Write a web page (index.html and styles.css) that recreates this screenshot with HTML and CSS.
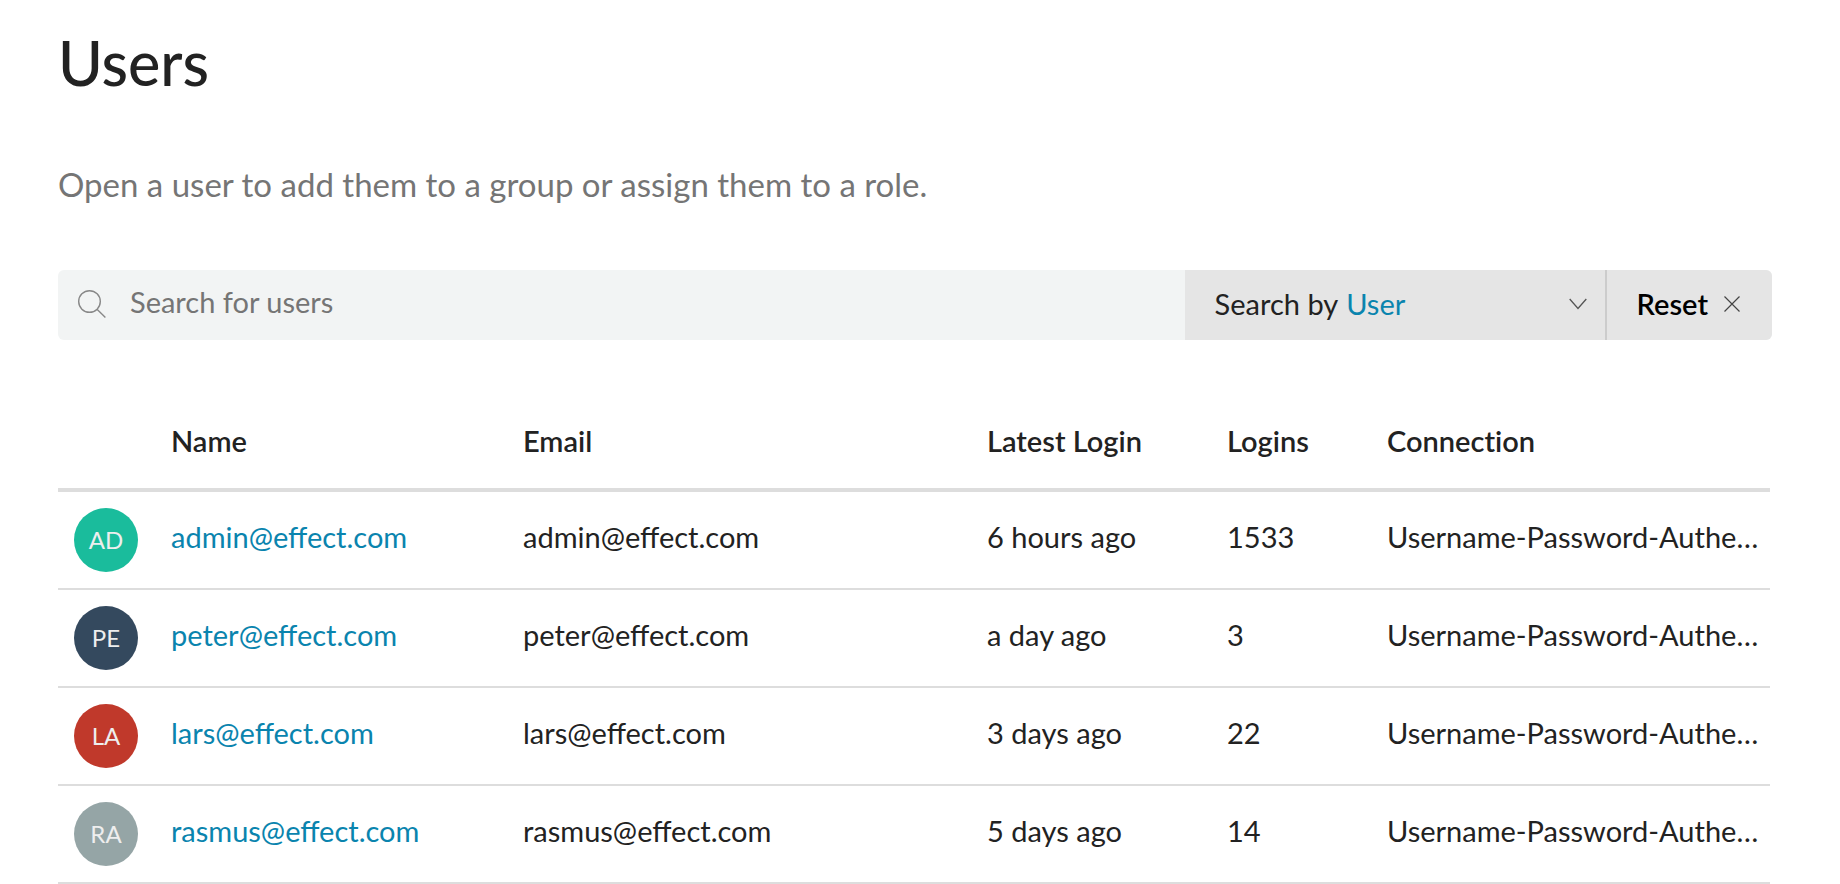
FILE: index.html
```html
<!DOCTYPE html>
<html lang="en">
<head>
<meta charset="utf-8">
<title>Users</title>
<link rel="stylesheet" href="styles.css">
</head>
<body>
<main class="page">
  <h1 class="title">Users</h1>
  <p class="intro">Open a user to add them to a group or assign them to a role.</p>

  <form class="search">
    <label class="search-field">
      <svg class="icon-search" viewBox="0 0 28 28" aria-hidden="true"><circle cx="11.5" cy="11.5" r="10.8"/><path d="M19 19.2l8.4 8.2"/></svg>
      <input class="search-input" type="text" placeholder="Search for users" aria-label="Search for users">
    </label>
    <label class="search-by">
      <span>Search by</span>
      <select class="search-select">
        <option>User</option>
        <option>Email</option>
        <option>Connection</option>
      </select>
      <svg class="icon-chevron" viewBox="0 0 18 12" aria-hidden="true"><path d="M.7 1L9 10.5 17.300 1"/></svg>
    </label>
    <button class="reset" type="reset">
      Reset
      <svg class="icon-close" viewBox="0 0 16 16" aria-hidden="true"><path d="M.5.5l15 15M15.500.5l-15 15"/></svg>
    </button>
  </form>

  <table class="users">
    <colgroup>
      <col class="col-avatar"><col class="col-name"><col class="col-email"><col class="col-latest"><col class="col-logins"><col>
    </colgroup>
    <thead>
      <tr><td></td><th scope="col">Name</th><th scope="col">Email</th><th scope="col">Latest Login</th><th scope="col">Logins</th><th scope="col">Connection</th></tr>
    </thead>
    <tbody>
      <tr><td><span class="avatar avatar-teal">AD</span></td><td><a href="#admin">admin@effect.com</a></td><td>admin@effect.com</td><td>6 hours ago</td><td>1533</td><td>Username-Password-Authe…</td></tr>
      <tr><td><span class="avatar avatar-navy">PE</span></td><td><a href="#peter">peter@effect.com</a></td><td>peter@effect.com</td><td>a day ago</td><td>3</td><td>Username-Password-Authe…</td></tr>
      <tr><td><span class="avatar avatar-red">LA</span></td><td><a href="#lars">lars@effect.com</a></td><td>lars@effect.com</td><td>3 days ago</td><td>22</td><td>Username-Password-Authe…</td></tr>
      <tr><td><span class="avatar avatar-gray">RA</span></td><td><a href="#rasmus">rasmus@effect.com</a></td><td>rasmus@effect.com</td><td>5 days ago</td><td>14</td><td>Username-Password-Authe…</td></tr>
    </tbody>
  </table>
</main>
</body>
</html>
```
FILE: styles.css
```css
* { box-sizing: border-box; }

body {
  margin: 0;
  background: #fff;
  color: #222;
  font-family: Lato, "Open Sans", sans-serif;
  font-size: 29px;
  line-height: 40px;
}

.page { padding: 26px 68px 0 58px; }

.title {
  margin: 0;
  font-size: 61px;
  line-height: 74px;
  font-weight: 500;
}

.intro {
  margin: 60px 0 0;
  color: #757575;
  font-size: 33px;
  line-height: 48px;
}

.search {
  display: flex;
  height: 70px;
  margin-top: 62px;
  border-radius: 6px;
  overflow: hidden;
  background: #f2f4f4;
}

.search-field {
  display: flex;
  flex: 1;
  align-items: center;
  gap: 24px;
  padding: 0 0 2px 20px;
}

.search-input {
  flex: 1;
  min-width: 0;
  height: 66px;
  padding: 0 0 6px;
  border: 0;
  outline: 0;
  background: none;
  color: #222;
  font: inherit;
}

.search-input::placeholder { color: #757575; opacity: 1; }

.search-by {
  display: flex;
  align-items: center;
  gap: 8px;
  width: 422px;
  padding: 0 18px 2px 30px;
  border-right: 2px solid #ccc;
  background: #e5e5e5;
}

.search-select {
  flex: 1;
  padding: 0;
  border: 0;
  outline: 0;
  appearance: none;
  background: none;
  color: #0a84ae;
  font: inherit;
}

.reset {
  display: flex;
  align-items: center;
  gap: 16px;
  padding: 0 32px 2px 30px;
  border: 0;
  background: #e5e5e5;
  color: #000;
  font: inherit;
  font-weight: 600;
}

svg { flex: none; fill: none; }
.icon-search { width: 28px; height: 28px; stroke: #888; stroke-width: 1.400; }
.icon-chevron { width: 18px; height: 12px; stroke: #555; stroke-width: 1.300; }
.icon-close { width: 16px; height: 16px; stroke: #444; stroke-width: 1.200; }

.users {
  width: calc(100% - 2px);
  margin-top: 60px;
  border-collapse: separate;
  border-spacing: 0;
  table-layout: fixed;
}

.col-avatar { width: 96px; }
.col-name { width: 352px; }
.col-email { width: 464px; }
.col-latest { width: 240px; }
.col-logins { width: 160px; }

.users th,
.users td {
  padding: 0 8px 0 17px;
  overflow: hidden;
  text-align: left;
  text-overflow: ellipsis;
  white-space: nowrap;
}

.users thead th,
.users thead td {
  height: 92px;
  padding-bottom: 6px;
  border-bottom: 4px solid #ddd;
  font-weight: 600;
  font-variant-ligatures: none;
}

.users tbody td { height: 98px; padding-bottom: 6px; border-bottom: 2px solid #ddd; }

.users a { color: #0a84ae; text-decoration: none; }

.users tbody td:first-child { padding: 0 0 0 16px; }

.avatar {
  display: flex;
  align-items: center;
  justify-content: center;
  width: 64px;
  height: 64px;
  border-radius: 50%;
  color: #eee;
  font-size: 24px;
}

.avatar-teal { background: #1abc9c; }
.avatar-navy { background: #34495e; }
.avatar-red { background: #c0392b; }
.avatar-gray { background: #95a5a6; }
```
